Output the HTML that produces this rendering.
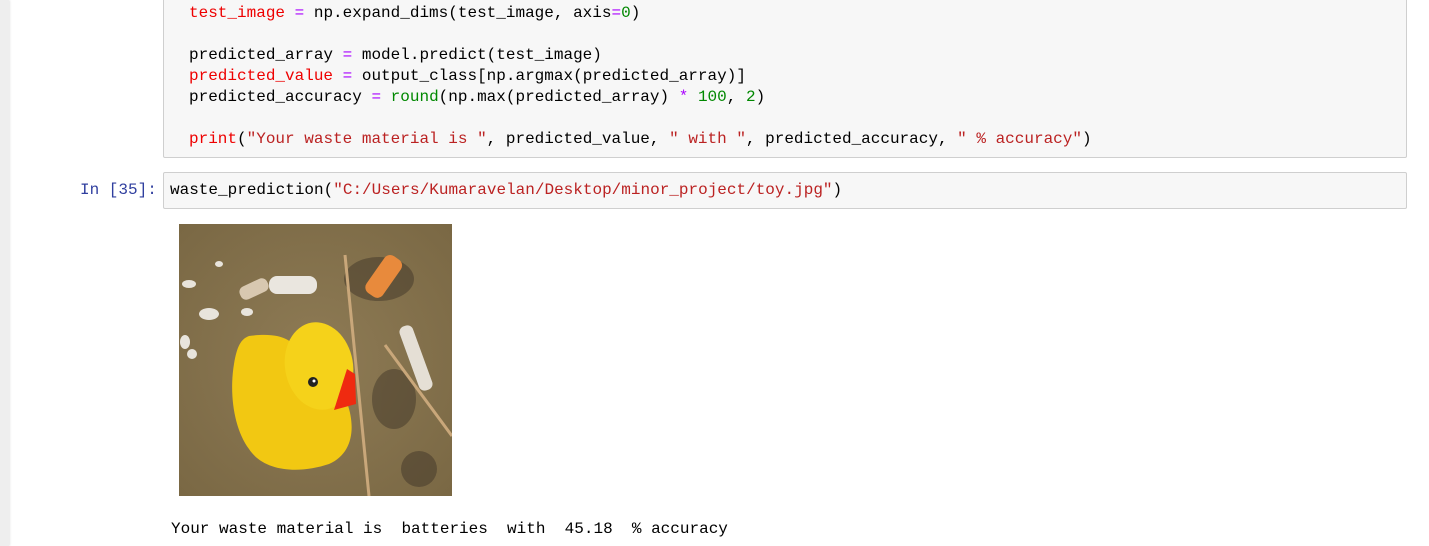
<!DOCTYPE html>
<html><head><style>
body{margin:0;width:1429px;height:546px;overflow:hidden;background:#fff;position:relative;font-family:"Liberation Mono",monospace;}
.strip{position:absolute;left:0;top:0;width:9px;height:546px;background:#eeeeee;box-shadow:1px 0 2px rgba(0,0,0,.1);}
.cell{position:absolute;left:163px;width:1242px;background:#f7f7f7;border:1px solid #cfcfcf;border-radius:2px;}
.code{position:absolute;left:189px;font-size:16px;line-height:21px;white-space:pre;color:#000;}
.v{color:#e00}.o{color:#a0f}.s{color:#b22}.g{color:#080}.n{color:#080}
.p{position:absolute;left:80px;top:180px;font-size:16px;color:#303f9f;line-height:21px;}
</style></head><body>
<div class="strip"></div>
<div class="cell" style="top:-2px;height:158px"></div>
<div class="code" style="top:3px"><span class="v">test_image</span> <span class="o">=</span> np.expand_dims(test_image, axis<span class="o">=</span><span class="n">0</span>)

predicted_array <span class="o">=</span> model.predict(test_image)
<span class="v">predicted_value</span> <span class="o">=</span> output_class[np.argmax(predicted_array)]
predicted_accuracy <span class="o">=</span> <span class="g">round</span>(np.max(predicted_array) <span class="o">*</span> <span class="n">100</span>, <span class="n">2</span>)

<span class="v">print</span>(<span class="s">"Your waste material is "</span>, predicted_value, <span class="s">" with "</span>, predicted_accuracy, <span class="s">" % accuracy"</span>)</div>
<div class="cell" style="top:172px;height:35px"></div>
<div class="p">In [35]:</div>
<div class="code" style="left:170px;top:180px">waste_prediction(<span class="s">"C:/Users/Kumaravelan/Desktop/minor_project/toy.jpg"</span>)</div>
<svg style="position:absolute;left:179px;top:224px" width="273" height="272" viewBox="0 0 273 272">
<defs><radialGradient id="sand" cx="50%" cy="50%" r="70%"><stop offset="0" stop-color="#8e7b55"/><stop offset="1" stop-color="#7a6844"/></radialGradient></defs>
<rect width="273" height="272" fill="url(#sand)"/>
<g fill="#e8e4dc"><ellipse cx="10" cy="60" rx="7" ry="4"/><ellipse cx="30" cy="90" rx="10" ry="6"/><ellipse cx="6" cy="118" rx="5" ry="7"/><ellipse cx="13" cy="130" rx="5" ry="5"/><ellipse cx="68" cy="88" rx="6" ry="4"/><ellipse cx="40" cy="40" rx="4" ry="3"/></g>
<g fill="#3a3025" opacity=".45"><ellipse cx="200" cy="55" rx="35" ry="22"/><ellipse cx="215" cy="175" rx="22" ry="30"/><ellipse cx="240" cy="245" rx="18" ry="18"/></g>
<rect x="60" y="58" width="30" height="14" rx="6" fill="#d8c8b0" transform="rotate(-25 75 65)"/>
<rect x="90" y="52" width="48" height="18" rx="8" fill="#eae6df"/>
<rect x="195" y="30" width="20" height="45" rx="7" fill="#e88a3c" transform="rotate(35 205 52)"/>
<rect x="230" y="100" width="14" height="68" rx="6" fill="#e5dfd5" transform="rotate(-20 237 134)"/>
<path d="M70 112 C100 108 115 115 120 130 L150 150 C175 175 185 225 150 240 C120 250 85 248 70 225 C55 205 50 170 55 140 C58 122 62 115 70 112 Z" fill="#f2c812"/>
<ellipse cx="140" cy="142" rx="34" ry="44" fill="#f5d21a" transform="rotate(-10 140 142)"/>
<path d="M168 145 L176 150 L177 180 L155 186 Z" fill="#ef2a10"/>
<circle cx="134" cy="158" r="5" fill="#222"/><circle cx="135" cy="157" r="1.5" fill="#fff"/>
<line x1="166" y1="31" x2="190" y2="272" stroke="#c9a77a" stroke-width="3"/>
<line x1="206" y1="121" x2="273" y2="212" stroke="#c9a77a" stroke-width="3"/>
</svg>
<div class="code" style="left:171px;top:519px">Your waste material is  batteries  with  45.18  % accuracy</div>
</body></html>
